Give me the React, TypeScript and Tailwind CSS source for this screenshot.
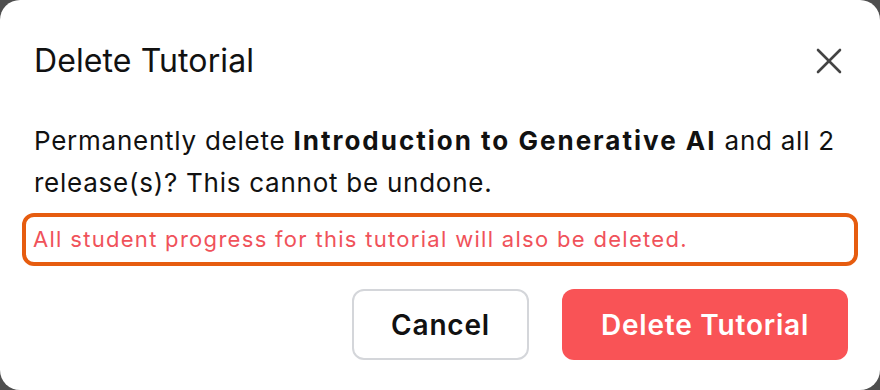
import React from "react";

export default function App() {
  return (
    <div className="w-[880px] h-[390px] bg-[#4f4f4f]" style={{ fontFamily: "Inter, 'Noto Sans', sans-serif" }}>
      <div className="flex h-full flex-col rounded-[20px] bg-white pl-[34px] pr-[32px] pt-[40px]">
        {/* header */}
        <div className="flex items-center justify-between">
          <h2 className="text-[32px] leading-[42px] font-normal tracking-[0.1px] text-[#111]">Delete Tutorial</h2>
          <button className="mr-[6px] text-[#444]" aria-label="Close">
            <svg width="26" height="26" viewBox="0 0 26 26" fill="none" stroke="currentColor" strokeWidth="2.6" strokeLinecap="round">
              <path d="M2 2 L24 24" />
              <path d="M24 2 L2 24" />
            </svg>
          </button>
        </div>

        <p className="mt-[38px] text-[26px] leading-[42px] tracking-[0.75px] text-[#111]">
          Permanently delete <span className="font-bold tracking-[2px]">Introduction to Generative AI</span> and all 2 release(s)? This cannot be undone.
        </p>

        <div className="ml-[-12px] mt-[9px] w-[836px] rounded-[12px] border-4 border-[#e65c0f] px-[7px] py-[8px]">
          <p className="text-[22px] leading-[29px] tracking-[1.3px] text-[#f0525a]">
            All student progress for this tutorial will also be deleted.
          </p>
        </div>

        <div className="mt-[23px] flex justify-end gap-[33px]">
          <button className="h-[71px] w-[177px] rounded-[12px] border-2 border-[#d4d6da] bg-white text-[28px] font-semibold tracking-[0.8px] text-[#111]">
            Cancel
          </button>
          <button className="h-[71px] w-[286px] rounded-[12px] bg-[#f95356] text-[28px] font-semibold tracking-[0.8px] text-white">
            Delete Tutorial
          </button>
        </div>
      </div>
    </div>
  );
}
